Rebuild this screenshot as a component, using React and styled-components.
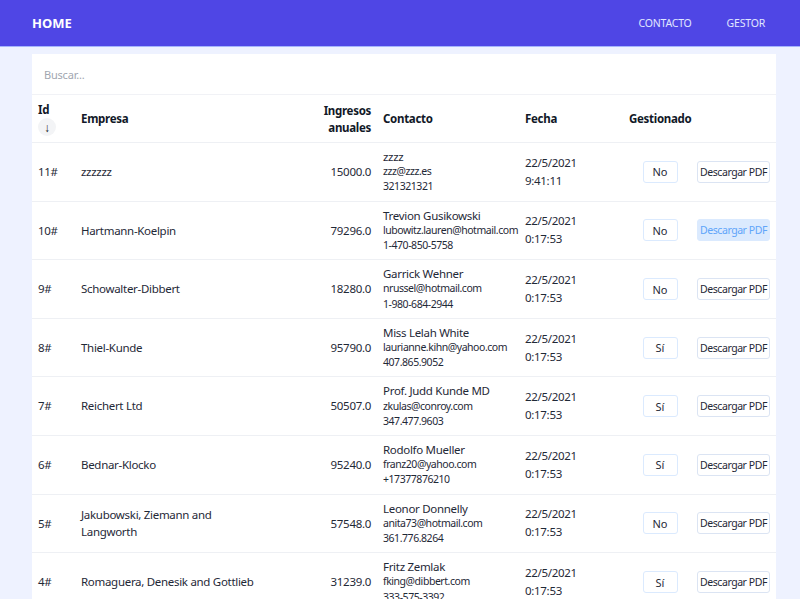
import React, { useState } from "react";
import styled, { createGlobalStyle } from "styled-components";

const GlobalStyle = createGlobalStyle`
  body {
    margin: 0;
    background: #eef2ff;
    font-family: "Noto Sans", "Open Sans", sans-serif;
    letter-spacing: -0.3px;
    color: #111827;
  }
`;

const rows = [
  { id: 11, empresa: "zzzzzz", ingresos: "15000.0", nombre: "zzzz", email: "zzz@zzz.es", tel: "321321321", fecha: "22/5/2021", hora: "9:41:11", gestionado: false },
  { id: 10, empresa: "Hartmann-Koelpin", ingresos: "79296.0", nombre: "Trevion Gusikowski", email: "lubowitz.lauren@hotmail.com", tel: "1-470-850-5758", fecha: "22/5/2021", hora: "0:17:53", gestionado: false },
  { id: 9, empresa: "Schowalter-Dibbert", ingresos: "18280.0", nombre: "Garrick Wehner", email: "nrussel@hotmail.com", tel: "1-980-684-2944", fecha: "22/5/2021", hora: "0:17:53", gestionado: false },
  { id: 8, empresa: "Thiel-Kunde", ingresos: "95790.0", nombre: "Miss Lelah White", email: "laurianne.kihn@yahoo.com", tel: "407.865.9052", fecha: "22/5/2021", hora: "0:17:53", gestionado: true },
  { id: 7, empresa: "Reichert Ltd", ingresos: "50507.0", nombre: "Prof. Judd Kunde MD", email: "zkulas@conroy.com", tel: "347.477.9603", fecha: "22/5/2021", hora: "0:17:53", gestionado: true },
  { id: 6, empresa: "Bednar-Klocko", ingresos: "95240.0", nombre: "Rodolfo Mueller", email: "franz20@yahoo.com", tel: "+17377876210", fecha: "22/5/2021", hora: "0:17:53", gestionado: true },
  { id: 5, empresa: "Jakubowski, Ziemann and Langworth", ingresos: "57548.0", nombre: "Leonor Donnelly", email: "anita73@hotmail.com", tel: "361.776.8264", fecha: "22/5/2021", hora: "0:17:53", gestionado: false },
  { id: 4, empresa: "Romaguera, Denesik and Gottlieb", ingresos: "31239.0", nombre: "Fritz Zemlak", email: "fking@dibbert.com", tel: "333-575-3392", fecha: "22/5/2021", hora: "0:17:53", gestionado: true },
  { id: 3, empresa: "Kessler Group", ingresos: "42110.0", nombre: "Alia Hermann", email: "alia.h@gmail.com", tel: "1-212-555-0183", fecha: "22/5/2021", hora: "0:17:53", gestionado: false },
];

const App = () => {
  const [search, setSearch] = useState("");

  return (
    <>
      <GlobalStyle />
      <Nav>
        <Brand>HOME</Brand>
        <NavLinks>
          <NavLink>CONTACTO</NavLink>
          <NavLink>GESTOR</NavLink>
        </NavLinks>
      </Nav>
      <Main>
        <Card>
          <SearchBar>
            <SearchInput
              placeholder="Buscar..."
              value={search}
              onChange={(e) => setSearch(e.target.value)}
            />
          </SearchBar>
          <Table>
            <colgroup>
              <col style={{ width: 43 }} />
              <col style={{ width: 197 }} />
              <col style={{ width: 105 }} />
              <col style={{ width: 142 }} />
              <col style={{ width: 104 }} />
              <col style={{ width: 74 }} />
              <col style={{ width: 79 }} />
            </colgroup>
            <thead>
              <tr>
                <Th>
                  Id
                  <SortBadge>↓</SortBadge>
                </Th>
                <Th>Empresa</Th>
                <Th $right>
                  Ingresos
                  <br />
                  anuales
                </Th>
                <Th>Contacto</Th>
                <Th>Fecha</Th>
                <Th colSpan={2}>Gestionado</Th>
              </tr>
            </thead>
            <tbody>
              {rows.map((r) => (
                <tr key={r.id}>
                  <Td>{r.id}#</Td>
                  <Td>{r.empresa}</Td>
                  <Td $right>{r.ingresos}</Td>
                  <Td>
                    <ContactName>{r.nombre}</ContactName>
                    <ContactLine>{r.email}</ContactLine>
                    <ContactLine>{r.tel}</ContactLine>
                  </Td>
                  <Td $tall>
                    {r.fecha}
                    <br />
                    {r.hora}
                  </Td>
                  <Td $center>
                    <StateButton>{r.gestionado ? "Sí" : "No"}</StateButton>
                  </Td>
                  <PdfCell>
                    <PdfButton $active={r.id === 10}>Descargar PDF</PdfButton>
                  </PdfCell>
                </tr>
              ))}
            </tbody>
          </Table>
        </Card>
      </Main>
    </>
  );
};

export default App;

const Nav = styled.nav`
  height: 46px;
  background: #4f46e5;
  border-bottom: 1px solid #a5b4fc;
  display: flex;
  align-items: center;
  justify-content: space-between;
  padding: 0 35px 0 32px;
`;

const Brand = styled.div`
  color: #ffffff;
  font-weight: 700;
  font-size: 13px;
  letter-spacing: 0;
`;

const NavLinks = styled.div`
  display: flex;
  gap: 35px;
`;

const NavLink = styled.a`
  color: #e0e7ff;
  font-size: 10.5px;
  letter-spacing: -0.2px;
  cursor: pointer;
`;

const Main = styled.main`
  padding: 7px 24px 0 32px;
`;

const Card = styled.div`
  background: #ffffff;
`;

const SearchBar = styled.div`
  box-sizing: border-box;
  height: 41px;
  display: flex;
  align-items: center;
  padding: 0 12px;
  border-bottom: 1px solid #f1f2f6;
`;

const SearchInput = styled.input`
  border: none;
  outline: none;
  padding: 0;
  width: 100%;
  font-family: inherit;
  font-size: 11px;
  letter-spacing: -0.2px;
  color: #374151;
  &::placeholder {
    color: #a1a6b0;
  }
`;

const Table = styled.table`
  width: 100%;
  table-layout: fixed;
  border-collapse: collapse;
  tr {
    border-bottom: 1px solid #eef0f4;
  }
`;

const Th = styled.th`
  font-size: 11.5px;
  font-weight: 700;
  line-height: 17px;
  text-align: ${(p) => (p.$right ? "right" : "left")};
  padding: 6px 6px 6px;
  vertical-align: middle;
  white-space: nowrap;
`;

const SortBadge = styled.span`
  display: flex;
  align-items: center;
  justify-content: center;
  width: 18px;
  height: 18px;
  border-radius: 50%;
  background: #f3f4f6;
  font-size: 12px;
  font-weight: 400;
  letter-spacing: 0;
`;

const Td = styled.td`
  font-size: 11.5px;
  line-height: ${(p) => (p.$tall ? "18px" : "17.5px")};
  padding: 6px;
  vertical-align: middle;
  color: #1f2937;
  text-align: ${(p) => (p.$right ? "right" : p.$center ? "center" : "left")};
`;

const PdfCell = styled(Td)`
  padding-left: 0;
  text-align: right;
`;

const ContactName = styled.div`
  font-size: 11.5px;
  line-height: 15.2px;
`;

const ContactLine = styled.div`
  font-size: 10.5px;
  letter-spacing: -0.45px;
  line-height: 15.2px;
  white-space: nowrap;
`;

const StateButton = styled.button`
  width: 35px;
  height: 22px;
  padding: 0;
  background: #ffffff;
  border: 1px solid #dbeafe;
  border-radius: 3px;
  font-family: inherit;
  font-size: 11px;
  color: #1f2937;
  cursor: pointer;
`;

const PdfButton = styled.button`
  width: 73px;
  height: 22px;
  padding: 0;
  background: ${(p) => (p.$active ? "#dbeafe" : "#ffffff")};
  border: 1px solid ${(p) => (p.$active ? "#dbeafe" : "#dbe4f3")};
  border-radius: 3px;
  font-family: inherit;
  font-size: 10.5px;
  letter-spacing: -0.45px;
  color: ${(p) => (p.$active ? "#60a5fa" : "#1f2937")};
  white-space: nowrap;
  cursor: pointer;
`;
